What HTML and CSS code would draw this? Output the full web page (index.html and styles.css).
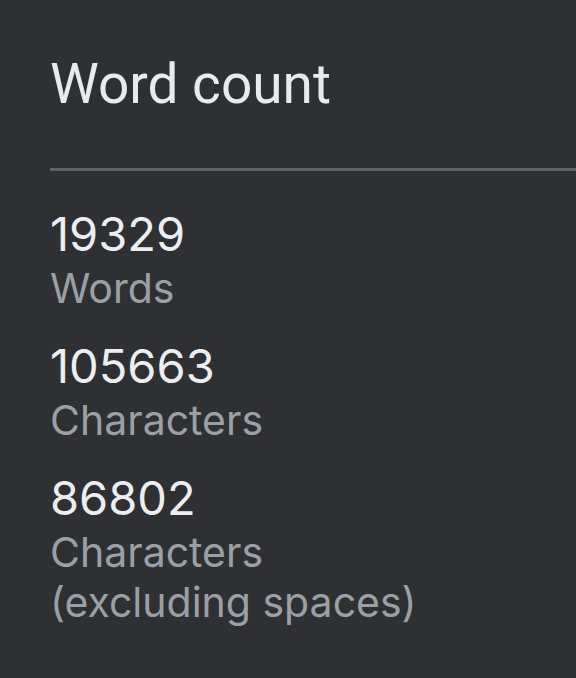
FILE: index.html
```html
<!DOCTYPE html>
<html>
<head>
  <title>Word count</title>
  <meta name="viewport" content="width=device-width, initial-scale=1.0">
  <link rel="stylesheet" href="styles.css">
</head>
<body>
  <div class="dialog">
    <h1 class="title">Word count</h1>
    <div class="divider"></div>
    <div class="stats">
      <div class="stat">
        <div class="value">19329</div>
        <div class="label">Words</div>
      </div>
      <div class="stat">
        <div class="value">105663</div>
        <div class="label">Characters</div>
      </div>
      <div class="stat">
        <div class="value">86802</div>
        <div class="label">Characters<br>(excluding spaces)</div>
      </div>
    </div>
  </div>
</body>
</html>
```

FILE: styles.css
```css
* {
  margin: 0;
  padding: 0;
  box-sizing: border-box;
}

body {
  font-family: Roboto, "Noto Sans", sans-serif;
  background: #2e3034;
  min-height: 100vh;
  overflow: hidden;
}

.dialog {
  padding: 51px 0 0 50px;
}

.title {
  font-size: 55px;
  font-weight: 400;
  line-height: 66px;
  color: #e8eaed;
}

.divider {
  height: 3px;
  background: #5f6166;
  margin-top: 51px;
}

.stats {
  display: flex;
  flex-direction: column;
  gap: 25px;
  padding-top: 35px;
}

.value {
  font-family: Inter, Roboto, sans-serif;
  font-size: 47px;
  line-height: 56px;
  color: #eceef1;
}

.label {
  font-family: Inter, Roboto, sans-serif;
  font-size: 41px;
  line-height: 50px;
  margin-top: 1px;
  color: #9aa0a6;
}
```
